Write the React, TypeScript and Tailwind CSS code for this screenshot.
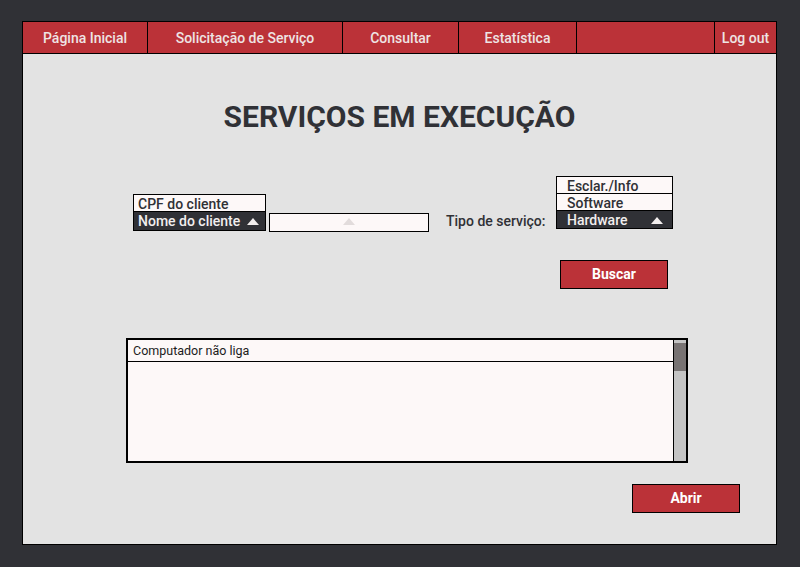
import React from 'react';

const navItems = [
  { label: 'Página Inicial', w: 'w-[125px]' },
  { label: 'Solicitação de Serviço', w: 'w-[195px]' },
  { label: 'Consultar', w: 'w-[116px]' },
  { label: 'Estatística', w: 'w-[118px]' },
  { label: '', w: 'w-[138px]' },
];

function Triangle({ className }: { className: string }) {
  return (
    <svg width="12" height="7" viewBox="0 0 12 7" className={className}>
      <polygon points="6,0 12,7 0,7" fill="currentColor" />
    </svg>
  );
}

export default function App() {
  return (
    <div className="w-[800px] h-[567px] bg-[#303136] pt-[21px] pl-[22px] font-['Roboto',sans-serif]">
      <div className="w-[755px] h-[524px] border border-black bg-[#e3e3e3] flex flex-col">
        {/* top navigation */}
        <nav className="flex h-[32px] border-b border-black bg-[#bb3238] text-[#eee4e4] text-[14px] font-medium">
          {navItems.map((item, i) => (
            <div
              key={i}
              className={`${item.w} shrink-0 border-r border-black flex items-center justify-center pt-[2px]`}
            >
              {item.label}
            </div>
          ))}
          <div className="flex-1 flex items-center justify-center pt-[2px]">Log out</div>
        </nav>

        <h1 className="mt-[45px] text-center text-[30px] leading-[36px] font-bold text-[#303136]">
          SERVIÇOS EM EXECUÇÃO
        </h1>

        {/* search form */}
        <div className="mt-[41px] pl-[110px] flex items-start text-[14px] font-medium text-[#303136]">
          <div className="flex items-end h-[55px]">
            <div className="w-[133px] border border-black">
              <div className="h-[17px] leading-[18px] bg-[#fdf8f8] border-b border-black pl-[4px]">
                CPF do cliente
              </div>
              <div className="h-[18px] leading-[19px] bg-[#303136] text-[#f2eeee] pl-[4px] pr-[6px] flex items-center justify-between">
                <span>Nome do cliente</span>
                <Triangle className="text-[#f2eeee]" />
              </div>
            </div>
            <div className="ml-[3px] mb-[-1px] w-[160px] h-[19px] border border-black bg-[#fdf8f8] flex items-center justify-center">
              <Triangle className="text-[#e2dcdc] -mt-[2px]" />
            </div>
            <div className="ml-[17px] w-[110px] h-[19px] leading-[20px] mb-[1px]">Tipo de serviço:</div>
          </div>

          <div className="flex flex-col">
            <div className="w-[117px] border border-black">
              <div className="h-[17px] leading-[18px] bg-[#fdf8f8] border-b border-black pl-[10px]">
                Esclar./Info
              </div>
              <div className="h-[17px] leading-[18px] bg-[#fdf8f8] border-b border-black pl-[10px]">
                Software
              </div>
              <div className="h-[17px] pt-[2px] bg-[#303136] text-[#f2eeee] pl-[10px] pr-[9px] flex items-center justify-between">
                <span className="leading-[15px]">Hardware</span>
                <Triangle className="text-[#f2eeee] -mt-[1px]" />
              </div>
            </div>
            <button className="mt-[31px] ml-[4px] w-[108px] h-[29px] border border-black bg-[#bb3238] text-white font-bold text-[14px]">
              Buscar
            </button>
          </div>
        </div>

        {/* results list */}
        <div className="mt-[49px] ml-[103px] w-[562px] h-[125px] border-2 border-black bg-[#fdf8f8] flex">
          <div className="flex-1">
            <div className="h-[22px] border-b border-black pl-[5px] text-[12.5px] leading-[22px] text-[#1c1c1c]">
              Computador não liga
            </div>
          </div>
          <div className="w-[13px] border-l border-black bg-[#c4c4c4] pt-[3px]">
            <div className="h-[28px] bg-[#787373]" />
          </div>
        </div>

        <button className="mt-[21px] ml-[609px] w-[108px] h-[29px] border border-black bg-[#bb3238] text-white font-bold text-[14px]">
          Abrir
        </button>
      </div>
    </div>
  );
}
